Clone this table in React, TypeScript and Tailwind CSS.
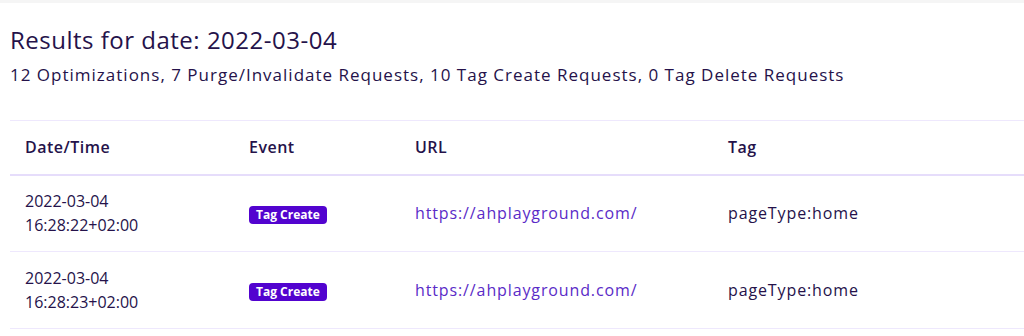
const rows = [
  { date: '2022-03-04', time: '16:28:22+02:00', event: 'Tag Create', url: 'https://ahplayground.com/', tag: 'pageType:home' },
  { date: '2022-03-04', time: '16:28:23+02:00', event: 'Tag Create', url: 'https://ahplayground.com/', tag: 'pageType:home' },
];

export default function App() {
  return (
    <div className="w-[1024px] h-[336px] bg-white overflow-hidden font-['Open_Sans',sans-serif] text-[#25124a]">
      <div className="h-[3px] bg-[#f5f5f5]" />
      <div className="pl-[10px] pt-[22px]">
        <h1 className="text-[24px] leading-[30px] font-medium tracking-[0.5px]">Results for date: 2022-03-04</h1>
        <p className="mt-[8px] text-[17px] leading-[24px] font-medium tracking-[1px]">
          12 Optimizations, 7 Purge/Invalidate Requests, 10 Tag Create Requests, 0 Tag Delete Requests
        </p>
        <table className="mt-[33px] w-[1014px] border-t border-[#eee8fd] text-[16px] tracking-[0.055em]">
          <thead>
            <tr className="border-b-2 border-[#e6ddfb] text-left">
              <th className="w-[224px] h-[54px] pl-[15px] font-semibold tracking-[0.03em]">Date/Time</th>
              <th className="w-[166px] pl-[15px] font-semibold tracking-[0.03em]">Event</th>
              <th className="w-[313px] pl-[15px] font-semibold tracking-[0.03em]">URL</th>
              <th className="pl-[15px] font-semibold tracking-[0.03em]">Tag</th>
            </tr>
          </thead>
          <tbody>
            {rows.map((r, i) => (
              <tr key={i} className="border-b border-[#eee8fd]">
                <td className="h-[77px] pl-[15px] leading-[24px] tracking-normal">
                  <div>{r.date}</div>
                  <div>{r.time}</div>
                </td>
                <td className="pl-[15px]">
                  <span className="inline-flex h-[18px] items-center rounded-[4px] bg-[#5203cf] px-[7px] text-[12px] font-bold tracking-normal text-white">
                    {r.event}
                  </span>
                </td>
                <td className="pl-[15px] text-[#5a2bc7]">{r.url}</td>
                <td className="pl-[15px]">{r.tag}</td>
              </tr>
            ))}
          </tbody>
        </table>
      </div>
    </div>
  );
}
